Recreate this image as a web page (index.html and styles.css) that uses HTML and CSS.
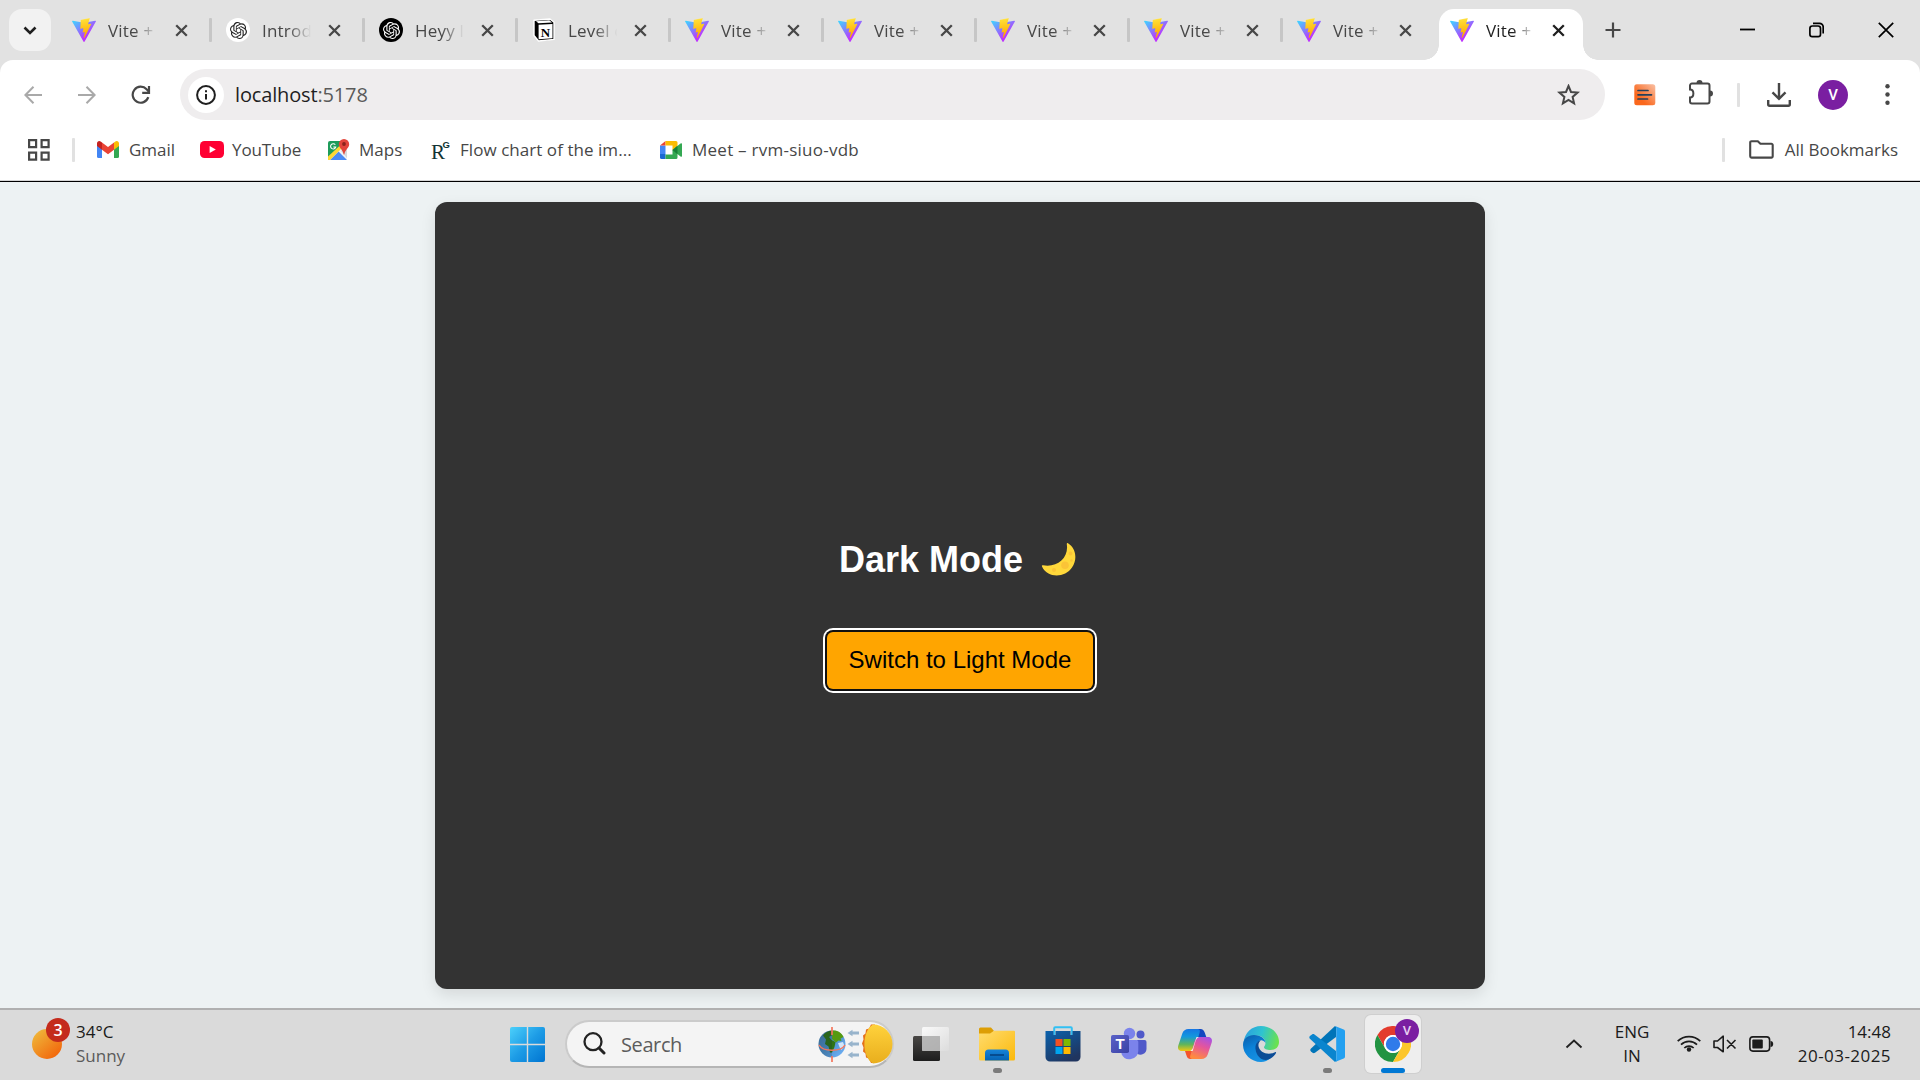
FILE: index.html
```html
<!DOCTYPE html>
<html lang="en">
<head>
<meta charset="utf-8">
<title>Vite + React</title>
<link rel="stylesheet" href="styles.css">
</head>
<body>
<svg class="defs" width="0" height="0" aria-hidden="true">
  <defs>
    <linearGradient id="viteA" x1="0" y1=".08" x2=".58" y2=".78"><stop stop-color="#41d1ff"/><stop offset="1" stop-color="#bd34fe"/></linearGradient>
    <linearGradient id="viteB" x1=".43" y1=".02" x2=".5" y2=".9"><stop stop-color="#ffea83"/><stop offset=".08" stop-color="#ffdd35"/><stop offset="1" stop-color="#ffa800"/></linearGradient>
    <linearGradient id="sunG" x1=".1" y1=".1" x2=".8" y2=".9"><stop stop-color="#efb63a"/><stop offset="1" stop-color="#f2690d"/></linearGradient>
    <linearGradient id="winG" gradientUnits="userSpaceOnUse" x1="0" y1="0" x2="35" y2="35"><stop stop-color="#4cd0fb"/><stop offset=".5" stop-color="#1d9ce6"/><stop offset="1" stop-color="#0074d1"/></linearGradient>
    <linearGradient id="extG" x1="1" y1="0" x2=".3" y2=".7"><stop stop-color="#f9c0a4"/><stop offset="1" stop-color="#fa671c"/></linearGradient>
    <linearGradient id="darkG" x1="0" y1="0" x2="0" y2="1"><stop stop-color="#494745"/><stop offset="1" stop-color="#1d1d1d"/></linearGradient>
    <linearGradient id="lightG" x1="0" y1="0" x2="1" y2="1"><stop stop-color="#fff"/><stop offset="1" stop-color="#ddd"/></linearGradient>
    <linearGradient id="folG" x1="0" y1="0" x2="1" y2="1"><stop stop-color="#ffdc6e"/><stop offset="1" stop-color="#fbb90b"/></linearGradient>
    <linearGradient id="blueG" x1="0" y1="0" x2="0" y2="1"><stop stop-color="#1784d8"/><stop offset="1" stop-color="#0563b4"/></linearGradient>
    <linearGradient id="stoG" x1="0" y1="0" x2=".6" y2="1"><stop stop-color="#0a62ad"/><stop offset="1" stop-color="#20355f"/></linearGradient>
    <linearGradient id="edgeA" x1="0" y1=".3" x2="1" y2=".5"><stop stop-color="#2a9fe0"/><stop offset=".5" stop-color="#2fc3d0"/><stop offset="1" stop-color="#6be24d"/></linearGradient>
    <linearGradient id="edgeB" x1="0" y1="0" x2=".5" y2="1"><stop stop-color="#0b5ba8"/><stop offset=".5" stop-color="#0c82d8"/><stop offset="1" stop-color="#1791e2"/></linearGradient>
    <linearGradient id="copA" x1="0" y1="0" x2="0" y2="1"><stop stop-color="#1676e3"/><stop offset=".35" stop-color="#1398dd"/><stop offset=".7" stop-color="#5fb55c"/><stop offset="1" stop-color="#f1c811"/></linearGradient>
    <linearGradient id="copB" x1=".8" y1="0" x2=".4" y2="1"><stop stop-color="#a552e6"/><stop offset=".45" stop-color="#e4559d"/><stop offset="1" stop-color="#ff8b40"/></linearGradient>
    <linearGradient id="teamG" x1="0" y1="0" x2="1" y2="1"><stop stop-color="#5a62c8"/><stop offset="1" stop-color="#3a41a5"/></linearGradient>
    <linearGradient id="earthG" x1="0" y1="0" x2="1" y2="1"><stop stop-color="#3f78a8"/><stop offset=".45" stop-color="#4d8ec6"/><stop offset="1" stop-color="#74b6ff"/></linearGradient>
    <linearGradient id="dayG" x1="0" y1="0" x2="0" y2="1"><stop stop-color="#ffd23c"/><stop offset="1" stop-color="#e9ae1d"/></linearGradient>
  </defs>
  <symbol id="vite" viewBox="0 0 256 257">
    <path fill="url(#viteA)" d="M255.153 37.938L134.897 252.976c-2.483 4.44-8.862 4.466-11.382.048L.875 37.958c-2.746-4.814 1.371-10.646 6.827-9.67l120.385 21.517a6.537 6.537 0 0 0 2.322-.004l117.867-21.483c5.438-.991 9.574 4.796 6.877 9.62Z"/>
    <path fill="url(#viteB)" d="M185.432.063L96.44 17.501a3.268 3.268 0 0 0-2.634 3.014l-5.474 92.456a3.268 3.268 0 0 0 3.997 3.378l24.777-5.718c2.318-.535 4.413 1.507 3.936 3.838l-7.361 36.047c-.495 2.426 1.782 4.5 4.151 3.78l15.304-4.649c2.372-.72 4.652 1.36 4.15 3.788l-11.698 56.621c-.732 3.542 3.979 5.473 5.943 2.437l1.313-2.028l72.516-144.72c1.215-2.423-.88-5.186-3.54-4.672l-25.505 4.922c-2.396.462-4.435-1.77-3.759-4.114l16.646-57.705c.677-2.35-1.37-4.583-3.769-4.113Z"/>
  </symbol>
  <symbol id="openai" viewBox="0 0 24 24">
    <path fill="currentColor" d="M22.2819 9.8211a5.9847 5.9847 0 0 0-.5157-4.9108 6.0462 6.0462 0 0 0-6.5098-2.9A6.0651 6.0651 0 0 0 4.9807 4.1818a5.9847 5.9847 0 0 0-3.9977 2.9 6.0462 6.0462 0 0 0 .7427 7.0966 5.98 5.98 0 0 0 .511 4.9107 6.051 6.051 0 0 0 6.5146 2.9001A5.9847 5.9847 0 0 0 13.2599 24a6.0557 6.0557 0 0 0 5.7718-4.2058 5.9894 5.9894 0 0 0 3.9977-2.9001 6.0557 6.0557 0 0 0-.7475-7.0729zm-9.022 12.6081a4.4755 4.4755 0 0 1-2.8764-1.0408l.1419-.0804 4.7783-2.7582a.7948.7948 0 0 0 .3927-.6813v-6.7369l2.02 1.1686a.071.071 0 0 1 .038.052v5.5826a4.504 4.504 0 0 1-4.4945 4.4944zm-9.6607-4.1254a4.4708 4.4708 0 0 1-.5346-3.0137l.142.0852 4.783 2.7582a.7712.7712 0 0 0 .7806 0l5.8428-3.3685v2.3324a.0804.0804 0 0 1-.0332.0615L9.74 19.9502a4.4992 4.4992 0 0 1-6.1408-1.6464zM2.3408 7.8956a4.485 4.485 0 0 1 2.3655-1.9728V11.6a.7664.7664 0 0 0 .3879.6765l5.8144 3.3543-2.0201 1.1685a.0757.0757 0 0 1-.071 0l-4.8303-2.7865A4.504 4.504 0 0 1 2.3408 7.872zm16.5963 3.8558L13.1038 8.364 15.1192 7.2a.0757.0757 0 0 1 .071 0l4.8303 2.7913a4.4944 4.4944 0 0 1-.6765 8.1042v-5.6772a.79.79 0 0 0-.407-.667zm2.0107-3.0231l-.142-.0852-4.7735-2.7818a.7759.7759 0 0 0-.7854 0L9.409 9.2297V6.8974a.0662.0662 0 0 1 .0284-.0615l4.8303-2.7866a4.4992 4.4992 0 0 1 6.6802 4.66zM8.3065 12.863l-2.02-1.1638a.0804.0804 0 0 1-.038-.0567V6.0742a4.4992 4.4992 0 0 1 7.3757-3.4537l-.142.0805L8.704 5.459a.7948.7948 0 0 0-.3927.6813zm1.0976-2.3654l2.602-1.4998 2.6069 1.4998v2.9994l-2.5974 1.4997-2.6067-1.4997Z"/>
  </symbol>
  <symbol id="close" viewBox="0 0 13 13"><path d="M1.2 1.2 11.8 11.8M11.8 1.2 1.2 11.8" stroke="currentColor" stroke-width="2.3" fill="none"/></symbol>
</svg>

<header class="tabstrip">
  <button class="tab-search"><svg width="14" height="9" viewBox="0 0 14 9"><path d="M1.5 1.5 7 7 12.5 1.5" fill="none" stroke="#1f1f1f" stroke-width="2.6"/></svg></button>
  <div class="tabs">
    <div class="tab"><svg class="fav"><use href="#vite"/></svg><span class="title">Vite +</span><svg class="x"><use href="#close"/></svg><i class="sep"></i></div>
    <div class="tab"><span class="fav chip light"><svg><use href="#openai"/></svg></span><span class="title">Introd</span><svg class="x"><use href="#close"/></svg><i class="sep"></i></div>
    <div class="tab"><span class="fav chip dark"><svg><use href="#openai"/></svg></span><span class="title">Heyy l</span><svg class="x"><use href="#close"/></svg><i class="sep"></i></div>
    <div class="tab"><svg class="fav" viewBox="0 0 24 24"><path d="M2 2.2 18 1l4 3.2v17.2L6.5 23 2 17.500Z" fill="#000" stroke="#fff" stroke-width="1.400" stroke-linejoin="round"/><path d="M4 3.200 17.300 2.300 20 4.400 6.500 5.200Z" fill="#fff"/><path d="M6.600 6.800 20.500 6v14.300L6.600 21.300Z" fill="#fff"/><text x="13.500" y="18.500" text-anchor="middle" class="notion-n">N</text></svg><span class="title">Level c</span><svg class="x"><use href="#close"/></svg><i class="sep"></i></div>
    <div class="tab"><svg class="fav"><use href="#vite"/></svg><span class="title">Vite +</span><svg class="x"><use href="#close"/></svg><i class="sep"></i></div>
    <div class="tab"><svg class="fav"><use href="#vite"/></svg><span class="title">Vite +</span><svg class="x"><use href="#close"/></svg><i class="sep"></i></div>
    <div class="tab"><svg class="fav"><use href="#vite"/></svg><span class="title">Vite +</span><svg class="x"><use href="#close"/></svg><i class="sep"></i></div>
    <div class="tab"><svg class="fav"><use href="#vite"/></svg><span class="title">Vite +</span><svg class="x"><use href="#close"/></svg><i class="sep"></i></div>
    <div class="tab"><svg class="fav"><use href="#vite"/></svg><span class="title">Vite +</span><svg class="x"><use href="#close"/></svg></div>
    <div class="tab active"><svg class="fav"><use href="#vite"/></svg><span class="title">Vite +</span><svg class="x"><use href="#close"/></svg></div>
  </div>
  <svg class="newtab" width="16" height="16" viewBox="0 0 16 16"><path d="M8 .5v15M.5 8h15" stroke="#474747" stroke-width="2.200"/></svg>
  <div class="window-buttons">
    <svg width="15" height="16" viewBox="0 0 15 16"><path d="M0 7.500h15" stroke="#000" stroke-width="1.800"/></svg>
    <svg width="15" height="16" viewBox="0 0 15 16"><rect x=".9" y="4" width="10.600" height="10.600" rx="2.400" fill="none" stroke="#000" stroke-width="1.700"/><path d="M4 1.300h6.500a3.700 3.700 0 0 1 3.700 3.700v6.500" fill="none" stroke="#000" stroke-width="1.700"/></svg>
    <svg width="16" height="16" viewBox="0 0 16 16"><path d="M.8.8 15.200 15.200M15.200.8.8 15.200" stroke="#000" stroke-width="1.700"/></svg>
  </div>
</header>

<nav class="toolbar">
  <svg class="back" width="18" height="18" viewBox="0 0 18 18"><path d="M9.500.8 1.400 9l8.100 8.200M1.400 9H18" fill="none" stroke="#a9a9a9" stroke-width="2"/></svg>
  <svg class="forward" width="18" height="18" viewBox="0 0 18 18"><path d="M8.500.8 16.600 9l-8.100 8.200M16.600 9H0" fill="none" stroke="#a9a9a9" stroke-width="2"/></svg>
  <svg class="reload" width="20" height="20" viewBox="0 0 20 20"><path d="M17.300 12.200A8 8 0 1 1 15.600 4.300l2 2M18 1v6.800h-6.800" fill="none" stroke="#474747" stroke-width="2.200"/></svg>
  <div class="omnibox">
    <span class="site-info"><svg width="20" height="20" viewBox="0 0 20 20"><circle cx="10" cy="10" r="8.900" fill="none" stroke="#1f1f1f" stroke-width="2"/><path d="M10 9v5.500M10 5.300v2" stroke="#1f1f1f" stroke-width="2"/></svg></span>
    <span class="url">localhost<span>:5178</span></span>
    <svg class="star" width="23" height="22" viewBox="0 0 23 22"><path d="m11.500 2 2.500 6 6.600.600-5 4.300 1.500 6.400-5.600-3.400-5.600 3.400 1.500-6.400-5-4.300 6.600-.600Z" fill="none" stroke="#474747" stroke-width="2"/></svg>
  </div>
  <svg class="ext" width="22" height="22" viewBox="0 0 22 22"><rect x=".3" y=".3" width="21" height="21" rx="2.500" fill="url(#extG)"/><path d="M4 6.500H14M4 10.800h13.500M4 15h9.500" stroke="#25405c" stroke-width="1.700" stroke-linecap="round"/></svg>
  <svg class="puzzle" width="26" height="26" viewBox="0 0 26 26"><path d="M4 3.500h15.500a2 2 0 0 1 2 2v16a2 2 0 0 1-2 2H4a2 2 0 0 1-2-2v-4c4.500 0 4.500-8 0-8v-4a2 2 0 0 1 2-2Z" fill="none" stroke="#474747" stroke-width="2"/><path d="M8.500 3a3 3 0 0 1 6 0ZM22 10.500a3 3 0 0 1 0 6Z" fill="#474747"/></svg>
  <i class="vsep"></i>
  <svg class="download" width="24" height="24" viewBox="0 0 24 24"><path d="M12 0v15.500M5.500 9.300 12 15.800l6.500-6.500M1.200 17v4.300a1.400 1.400 0 0 0 1.400 1.400h18.800a1.400 1.400 0 0 0 1.400-1.400V17" fill="none" stroke="#474747" stroke-width="2.400"/></svg>
  <span class="avatar">V</span>
  <svg class="menu" width="5" height="21" viewBox="0 0 5 21"><g fill="#474747"><circle cx="2.500" cy="2.300" r="2.200"/><circle cx="2.500" cy="10.500" r="2.200"/><circle cx="2.500" cy="18.700" r="2.200"/></g></svg>
</nav>

<nav class="bookmarks">
  <svg class="apps" width="22" height="22" viewBox="0 0 22 22"><path d="M1.100 1.100h7v7h-7zM13.600 1.100h7v7h-7zM1.100 13.600h7v7h-7zM13.600 13.600h7v7h-7z" fill="none" stroke="#474747" stroke-width="2.200"/></svg>
  <i class="vsep"></i>
  <a class="bm gmail"><svg width="22" height="17" viewBox="0 0 22 17"><path d="M0 3v12.500A1.500 1.500 0 0 0 1.500 17H5V7Z" fill="#4285f4"/><path d="M22 3v12.500a1.500 1.500 0 0 1-1.500 1.500H17V7Z" fill="#34a853"/><path d="M5 1.600V8.700l6 4.500 6-4.500V1.600l-6 4.500Z" fill="#ea4335"/><path d="M0 2.500C0 .2 2.300-.700 4 .800l1 .8v7.100L0 5Z" fill="#c5221f"/><path d="M22 2.500c0-2.300-2.300-3.200-4-1.700l-1 .8v7.100L22 5Z" fill="#fbbc04"/></svg><span>Gmail</span></a>
  <a class="bm youtube"><svg width="24" height="17" viewBox="0 0 24 17"><rect width="24" height="17" rx="4.500" fill="#ff0033"/><path d="m9.600 5 6.200 3.500L9.600 12Z" fill="#fff"/></svg><span>YouTube</span></a>
  <a class="bm maps"><svg width="23" height="23" viewBox="0 0 23 23"><rect x="1" y="3" width="19" height="19" rx="2" fill="#f1f3f4"/><path d="M1 20V5a2 2 0 0 1 2-2h12v6Z" fill="#1e9c5a"/><path d="m3 22 8.500-8.500L20 22Z" fill="#4a8af4"/><path d="M1 18.500V22h2L16 9l-2-2.500Z" fill="#fdd835"/><path d="M14 13 20 20V9Z" fill="#d5d9dd"/><path d="M17 1a5.200 5.200 0 0 1 5.200 5.200c0 3.600-4 5-4.900 10.300h-.6C15.800 11.200 11.800 9.800 11.800 6.200A5.200 5.200 0 0 1 17 1Z" fill="#e2453a"/><circle cx="17" cy="6" r="1.900" fill="#8b241b"/><path d="M8.300 6.800A2.600 2.600 0 1 0 8.700 9H6.300" fill="none" stroke="#fff" stroke-width="1.100"/></svg><span>Maps</span></a>
  <a class="bm rg"><svg width="20" height="24" viewBox="0 0 20 24"><text x="0" y="21" class="rg-r">R</text><text x="11.500" y="9.500" class="rg-g">G</text></svg><span>Flow chart of the im...</span></a>
  <a class="bm meet"><svg width="22" height="18" viewBox="0 0 22 18"><path d="M0 4.500h5.500V13H0Z" fill="#4285f4"/><path d="M0 13h5.500v5H1.500A1.500 1.500 0 0 1 0 16.500Z" fill="#1967d2"/><path d="M5.500 0v4.500H0Z" fill="#ea4335"/><path d="M5.500 0H16a1.500 1.500 0 0 1 1.500 1.500V9h-5V4.500h-7Z" fill="#fbbc04"/><path d="M5.500 13.500h7V9h5v7.500A1.500 1.500 0 0 1 16 18H5.500Z" fill="#34a853"/><path d="m12.500 9 8-6.500q1.500-.800 1.500.500v12q0 1.300-1.500.500Z" fill="#34a853"/><path d="m12.500 9 5-4.200v8.400Z" fill="#188038"/></svg><span>Meet – rvm-siuo-vdb</span></a>
  <div class="all"><i class="vsep"></i><svg width="25" height="19" viewBox="0 0 25 19"><path d="M2.500 1.200h6.300l2.600 2.600h11a1.300 1.300 0 0 1 1.300 1.300v11.200a1.300 1.300 0 0 1-1.300 1.300H2.500a1.300 1.300 0 0 1-1.300-1.300V2.500a1.300 1.300 0 0 1 1.300-1.300Z" fill="none" stroke="#474747" stroke-width="2.100"/></svg><span>All Bookmarks</span></div>
</nav>

<main class="page">
  <section class="card">
    <h1>Dark Mode <svg class="moon" width="35" height="33" viewBox="0 0 35 33"><path d="M27 .3C34.500 5 37 15.500 31 24.500 24 35 6.500 35.500 1 23.500c-.4-1 0-1.500 1-1.200C16 25 28 15 25.800 1.300c-.1-1 .4-1.500 1.200-1Z" fill="#ffd83b"/><g fill="#fbc437"><circle cx="24" cy="22.300" r="3.800"/><circle cx="13" cy="27" r="2"/><circle cx="29.500" cy="10.500" r="2"/><circle cx="30.500" cy="17.500" r="1.200"/></g></svg></h1>
    <button class="toggle">Switch to Light Mode</button>
  </section>
</main>

<footer class="taskbar">
  <div class="weather">
    <span class="sun"><svg width="30" height="30" viewBox="0 0 30 30"><circle cx="15" cy="15" r="15" fill="url(#sunG)"/></svg><b>3</b></span>
    <div class="two-line"><span>34°C</span><span class="muted">Sunny</span></div>
  </div>
  <div class="dock">
    <svg class="start" width="35" height="35" viewBox="0 0 35 35"><path d="M2 0h14.800v16.800H0V2a2 2 0 0 1 2-2ZM18.200 0H33a2 2 0 0 1 2 2v14.800H18.200ZM0 18.200h16.800V35H2a2 2 0 0 1-2-2ZM18.200 18.200H35V33a2 2 0 0 1-2 2H18.200Z" fill="url(#winG)"/></svg>
    <div class="search">
      <svg width="23" height="24" viewBox="0 0 23 24"><circle cx="10" cy="9.700" r="8.500" fill="none" stroke="#222" stroke-width="2.300"/><path d="m16 16 5 5" stroke="#222" stroke-width="3" stroke-linecap="round"/></svg>
      <span>Search</span>
      <svg class="doodle" width="75" height="42" viewBox="0 0 75 42"><circle cx="14" cy="21" r="13.500" fill="url(#earthG)"/><path d="M5 12.500c2-3 5.500-4.500 9-5l1 4-4 2.500 2.500 3 4 2-1 5-2.500 5.500h-2l-1.500-6-3.500-2.500 1-4.500Z" fill="#2f7316"/><path d="M14.500 7.600c5-.600 9 2 11 6.400l-3 1.500 1 2.500-3-.500-2.500 2-4-3.500Z" fill="#559a10"/><path d="m20 20 5-1 1.500 4-3 4-2-3Z" fill="#cfe6fb"/><path d="M14 7.500a13.500 13.500 0 0 0 0 27Z" fill="#123" opacity=".18"/><path d="M1 22c4 7 22 7 26 0" fill="none" stroke="#f4765c" stroke-width="1.500"/><path d="M14 4v8M14 33v6" stroke="#f4765c" stroke-width="1.700"/><path d="m29.500 10 5-3.300V8.500H41v3h-6.500v1.800ZM29.500 21l5-3.300v1.800H41v3h-6.500v1.800ZM29.500 32l5-3.300v1.800H41v3h-6.500v1.800Z" fill="#98b4cc"/><path d="m53 1.500-2 4-3 1-.5 4-2.500 2 .5 4-1.500 4 1.500 4-.500 4 2.500 2 .5 4 3 1 2 4.500h4V1.500Z" fill="#e5701a"/><path d="M55 1.500a19.500 19.500 0 0 1 0 39C43.500 34 43.500 8 55 1.500Z" fill="url(#dayG)"/></svg>
    </div>
    <div class="app"><svg width="36" height="36" viewBox="0 0 36 36"><rect x="0" y="10" width="27" height="25" rx="1.500" fill="url(#darkG)"/><rect x="9" y="1" width="27" height="24" rx="1.500" fill="url(#lightG)" opacity=".85"/><path d="M9 10h18v15H9Z" fill="#aaa" opacity=".75"/></svg></div>
    <div class="app"><svg width="36" height="36" viewBox="0 0 36 36"><path d="M0 8V3a1.500 1.500 0 0 1 1.500-1.500H12l3 3.500-3 3Z" fill="#dd9e05"/><path d="M0 7.500h11l4-2.700h20a1 1 0 0 1 1 1V33a1.500 1.500 0 0 1-1.500 1.500h-33A1.500 1.500 0 0 1 0 33Z" fill="url(#folG)"/><path d="M6 34.500V27a3.500 3.500 0 0 1 3.500-3.500h17A3.500 3.500 0 0 1 30 27v7.500Z" fill="url(#blueG)"/><path d="M11 29h14" stroke="#06488a" stroke-width="1.800"/></svg><i class="run"></i></div>
    <div class="app"><svg width="36" height="36" viewBox="0 0 36 36"><path d="M9.200 9V2.200a1 1 0 0 1 1-1h15.600a1 1 0 0 1 1 1V9" fill="none" stroke="#32c0f3" stroke-width="2"/><path d="M.5 5h8v4h2V5h15v4h2V5h8v26a4.500 4.500 0 0 1-4.500 4.500H5A4.500 4.500 0 0 1 .5 31Z" fill="url(#stoG)"/><path d="M10.500 13h7v7h-7Z" fill="#f25022"/><path d="M18.500 13h7v7h-7Z" fill="#7fba00"/><path d="M10.500 21h7v7h-7Z" fill="#00a4ef"/><path d="M18.500 21h7v7h-7Z" fill="#ffb900"/></svg></div>
    <div class="app"><svg width="36" height="36" viewBox="0 0 36 36"><circle cx="29.500" cy="8.500" r="4" fill="#5059c9"/><path d="M26 14h7.500a2 2 0 0 1 2 2v7a6 6 0 0 1-9.500 4.500Z" fill="#5059c9"/><circle cx="18.500" cy="7.500" r="5.700" fill="#7b83eb"/><path d="M11 14h14.500a1.800 1.800 0 0 1 1.800 1.800V25a8.800 8.800 0 0 1-16.800 3Z" fill="#7b83eb"/><rect x="0" y="9" width="18" height="18" rx="1.800" fill="url(#teamG)"/><text x="9" y="23" text-anchor="middle" class="teams-t">T</text></svg></div>
    <div class="app"><svg width="36" height="36" viewBox="0 0 36 36"><path d="M18 3h5.500c2.200 0 3.500 1.500 4.200 3.600L29.300 11H25c-3 0-4 1.500-4.800 4Z" fill="#1347c0"/><path d="M18 33h-4.500c-2.200 0-3.500-1.500-4-3.600L8 25h4.500c3 0 4-1.500 4.800-4Z" fill="#f4542b"/><path d="M11.500 3H20c2.500 0 3.500 1 2.500 4l-4 13.500C17.500 23.500 16 25 13 25H5c-3.500 0-4.600-2.500-3.700-5.500l4-12C6.300 4.700 8.500 3 11.500 3Z" fill="url(#copA)"/><path d="M24.500 33H16c-2.500 0-3.500-1-2.500-4l4-13.500C18.500 12.500 20 11 23 11h8c3.500 0 4.600 2.500 3.700 5.500l-4 12c-1 2.800-3.200 4.500-6.200 4.500Z" fill="url(#copB)"/><path d="M19.500 11H22c-2.500 1-3 3-3.700 5l-2.600 9h-2.500c2-1 2.800-3 3.400-5Z" fill="#eee"/></svg></div>
    <div class="app"><svg width="36" height="36" viewBox="0 0 36 36"><path d="M.5 17C1.500 6.500 9 0 18 0c11 0 18 8 18 16 0 5-3.500 8-8.500 8-4 0-6.500-1.300-6.500-2.800 0-1 1.500-1.700 1.500-4.200 0-4-4-7.500-9-7.500C7 9.500 2 12.500.5 17Z" fill="url(#edgeA)"/><path d="M0 19C0 12.500 5.500 9 11 9c7 0 11.500 4 11.500 8-3-5-9-3-9 3.500 0 7 7 13 14.500 11C25 34.500 21.500 36 18 36 8 36 0 28 0 19Z" fill="url(#edgeB)"/><path d="M18 14.300c-3 0-6 4-5.500 8.500C13.300 31 20 36 26 33.300c3.500-1.600 6-4.300 7-6.300.3-.8-.3-1.200-1-.8-7 3.500-15.500.3-16.500-6-.3-2.300.5-4.500 2.500-5.900Z" fill="#0b4c96"/></svg></div>
    <div class="app"><svg width="36" height="36" viewBox="0 0 36 36"><path d="M26 0 2 22.500c-1 1-1 2 0 3l1.500 1.300c.8.600 1.600.6 2.500 0L27 11V1Z" fill="#0074b8"/><path d="M26 36 .9 12.800c-.8-.8-.8-1.900 0-2.700L3 8.500c.8-.6 1.600-.6 2.500 0L27 25v10Z" fill="#0a85ce"/><path d="m26 0 8.700 3.500c.8.400 1.300 1.100 1.300 2v25c0 .9-.5 1.600-1.300 2L26 36c.8-.5 1.200-1.300 1.200-2.200V2.200C27.200 1.300 26.800.5 26 0Z" fill="#23a0f0"/></svg><i class="run"></i></div>
    <div class="app current"><svg width="36" height="36" viewBox="0 0 36 36"><circle cx="18" cy="18" r="18" fill="#fff"/><path d="M18 9h15.600A18 18 0 0 0 2.400 9l7.800 13.500A9 9 0 0 1 18 9Z" fill="#e33b2e"/><path d="M25.800 22.500 18 36A18 18 0 0 1 2.400 9l7.800 13.500a9 9 0 0 0 15.600 0Z" fill="#229342"/><path d="M18 9h15.600A18 18 0 0 1 18 36l7.800-13.500A9 9 0 0 0 18 9Z" fill="#fcc62a"/><circle cx="18" cy="18" r="9" fill="#fff"/><circle cx="18" cy="18" r="7.200" fill="#2f7bea"/></svg><b>V</b><i class="run"></i></div>
  </div>
  <div class="tray">
    <svg class="chev" width="18" height="10" viewBox="0 0 18 10"><path d="m1.500 8.500 7.500-7 7.500 7" fill="none" stroke="#222" stroke-width="1.900"/></svg>
    <div class="two-line lang"><span>ENG</span><span>IN</span></div>
    <svg class="wifi" width="24" height="18" viewBox="0 0 24 18"><g fill="none" stroke="#1b1b1b" stroke-width="1.700"><path d="M.7 7.200a16 16 0 0 1 22.600 0M4 10.600a11.300 11.300 0 0 1 16 0M7.300 14a6.700 6.700 0 0 1 9.400 0"/></g><circle cx="12" cy="15.500" r="2.200" fill="#1b1b1b"/></svg>
    <svg class="vol" width="24" height="18" viewBox="0 0 24 18"><path d="M1 6h3.500L10.200 1.200v15.600L4.500 12.500H1ZM14 5l8.500 8.500M22.500 5 14 13.500" fill="none" stroke="#1b1b1b" stroke-width="1.600" stroke-linejoin="round"/></svg>
    <svg class="bat" width="25" height="16" viewBox="0 0 25 16"><rect x=".9" y=".9" width="19.700" height="14.200" rx="3" fill="none" stroke="#1b1b1b" stroke-width="1.600"/><rect x="3.300" y="3.500" width="10.500" height="9" rx="1" fill="#1b1b1b"/><path d="M21.500 5c1.700 0 2.700 1 2.700 3s-1 3-2.700 3Z" fill="#1b1b1b"/></svg>
    <div class="two-line clock"><span>14:48</span><span class="date">20-03-2025</span></div>
  </div>
</footer>
</body>
</html>
```
FILE: styles.css
```css
* { box-sizing: border-box; }

body {
  margin: 0;
  width: 1920px;
  height: 1080px;
  overflow: hidden;
  display: flex;
  flex-direction: column;
  background: #e2e2e2;
  font-family: "Open Sans", "Noto Sans", sans-serif;
  font-size: 17px;
  color: #474747;
}

svg { display: block; flex: none; }
.defs { position: absolute; }
button { border: 0; padding: 0; font: inherit; }

/* Tab strip */
.tabstrip {
  height: 60px;
  flex: none;
  display: flex;
  padding-left: 9px;
  background: #e2e2e2;
}
.tab-search {
  width: 42px;
  height: 42px;
  margin-top: 9px;
  border-radius: 13px;
  background: #f2f2f2;
  display: grid;
  place-items: center;
}
.tabs { display: flex; align-items: flex-end; margin-left: 9px; }
.tab {
  width: 153px;
  height: 51px;
  padding: 0 1px 9px 13px;
  display: flex;
  align-items: center;
  flex: none;
}
.tab:first-child { padding-left: 12px; }
.tab .fav { width: 24px; height: 24px; flex: none; }
.chip { border-radius: 50%; display: grid; place-items: center; }
.chip svg { width: 17px; height: 17px; }
.chip.light { background: #fff; color: #222; }
.chip.dark { background: #000; color: #fff; }
.notion-n { font: bold 13px "Liberation Serif", serif; }
.title {
  width: 53px;
  margin-left: 12px;
  padding-top: 2px;
  line-height: 24px;
  letter-spacing: .2px;
  white-space: nowrap;
  overflow: hidden;
  -webkit-mask-image: linear-gradient(90deg, #000 50%, transparent 93%);
  mask-image: linear-gradient(90deg, #000 50%, transparent 93%);
}
.tab .x { width: 13px; height: 13px; margin-left: 13px; color: #474747; }
.tab:first-child .x { margin-left: 14px; }
.sep {
  width: 3px;
  height: 24px;
  margin-left: auto;
  border-radius: 1px;
  background: #c6c6c6;
}
.tab.active {
  position: relative;
  width: 144px;
  margin: 0 9px 0 2px;
  padding-left: 11px;
  border-radius: 15px 15px 0 0;
  background: #fff;
  color: #1f1f1f;
}
.active .x { color: #1f1f1f; }
.active::before, .active::after {
  content: "";
  position: absolute;
  bottom: 0;
  width: 15px;
  height: 15px;
}
.active::before { right: 100%; background: radial-gradient(circle at 0 0, transparent 14.500px, #fff 15px); }
.active::after { left: 100%; background: radial-gradient(circle at 100% 0, transparent 14.500px, #fff 15px); }
.newtab { margin: 22px 0 0 13px; }
.window-buttons {
  display: flex;
  gap: 54px;
  margin: 22px 26px 0 auto;
}

/* Toolbar */
.toolbar {
  height: 69px;
  flex: none;
  display: flex;
  align-items: center;
  padding: 0 30px 0 24px;
  background: #fff;
  border-radius: 13px 13px 0 0;
}
.forward { margin-left: 36px; }
.reload { margin-left: 35px; }
.omnibox {
  width: 1425px;
  height: 51px;
  margin-left: 29px;
  padding: 0 25px 0 8px;
  border-radius: 26px;
  background: #efedee;
  display: flex;
  align-items: center;
}
.site-info {
  width: 36px;
  height: 36px;
  border-radius: 50%;
  background: #fff;
  display: grid;
  place-items: center;
}
.url { margin-left: 11px; font-size: 20px; letter-spacing: -.15px; color: #1f1f1f; }
.url span { color: #5a5a5a; }
.star { margin-left: auto; }
.ext { margin-left: 29px; }
.puzzle { margin-left: 32px; margin-top: -3px; }
.vsep { width: 3px; height: 24px; border-radius: 1px; background: #e1e1e1; flex: none; }
.toolbar .vsep { margin-left: 23px; }
.download { margin-left: 27px; }
.avatar {
  width: 30px;
  height: 30px;
  margin-left: 27px;
  border-radius: 50%;
  background: #7a1ea1;
  color: #fff;
  font: 500 15px/30px Roboto, sans-serif;
  text-align: center;
}
.menu { margin-left: auto; }

/* Bookmarks bar */
.bookmarks {
  height: 53px;
  flex: none;
  display: flex;
  align-items: center;
  padding: 0 22px 11px 28px;
  background: #fff;
  border-bottom: 1px solid #000;
  box-shadow: inset 0 -1px #d6d6d6;
}
.bookmarks > .vsep { margin: 0 22px; }
.bm { display: flex; align-items: center; white-space: nowrap; flex: none; }
.gmail { width: 103px; gap: 10px; }
.youtube { width: 127px; gap: 8px; letter-spacing: -.1px; }
.maps { width: 104px; gap: 9px; }
.rg { width: 229px; gap: 9px; letter-spacing: .05px; }
.meet { gap: 10px; letter-spacing: .25px; }
.rg-r { font: 21px "Liberation Serif", serif; fill: #133; }
.rg-g { font: bold 9.500px "Liberation Sans", sans-serif; fill: #133; }
.all { margin-left: auto; display: flex; align-items: center; }
.all svg { margin: 0 11px 0 24px; }

/* Page */
.page {
  height: 826px;
  flex: none;
  display: flex;
  justify-content: center;
  padding-top: 20px;
  background: #edf2f3;
}
.card {
  width: 1050px;
  height: 787px;
  padding-top: 36px;
  border-radius: 12px;
  background: #333;
  box-shadow: 0 6px 15px rgba(0, 0, 0, .1);
  display: flex;
  flex-direction: column;
  align-items: center;
  justify-content: center;
  font-family: "Liberation Sans", Arial, sans-serif;
}
.card h1 {
  margin: 0 5px 51px 0;
  font-size: 36px;
  line-height: 42px;
  color: #fff;
  display: flex;
  align-items: center;
  gap: 18px;
}
.toggle {
  width: 266px;
  height: 57px;
  border-radius: 6px;
  background: #ffa500;
  color: #000;
  font-size: 24px;
  box-shadow: 0 0 0 2px #101010, 0 0 0 4px #fff;
}

/* Taskbar */
.taskbar {
  height: 72px;
  flex: none;
  display: flex;
  align-items: center;
  padding-bottom: 2px;
  border-top: 2px solid #b0b0b0;
  background: #dadada;
  color: #1b1b1b;
}
.two-line { display: flex; flex-direction: column; line-height: 24px; }
.muted { color: #5b5b5b; }
.weather { width: 478px; padding-left: 32px; display: flex; gap: 14px; }
.sun { position: relative; padding-top: 9px; }
.sun b {
  position: absolute;
  left: 14px;
  top: -2px;
  width: 24px;
  height: 24px;
  border-radius: 50%;
  background: #c42b1c;
  color: #fff;
  font: 600 16px/24px "Open Sans", sans-serif;
  text-align: center;
}
.dock { display: flex; align-items: center; margin-left: 32px; }
.search {
  width: 329px;
  height: 48px;
  margin: 0 4px 0 20px;
  padding: 0 0 0 16px;
  border: 2px solid #cbcbcb;
  border-bottom-color: #b5b5b5;
  border-radius: 24px;
  background: #f4f4f4;
  display: flex;
  align-items: center;
}
.search span { margin-left: 15px; font-size: 20px; letter-spacing: -.4px; color: #5c5c5c; }
.doodle { margin: 0 -1px 0 auto; }
.app {
  position: relative;
  width: 66px;
  height: 58px;
  display: grid;
  place-items: center;
}
.run {
  position: absolute;
  left: 50%;
  bottom: 0;
  width: 9px;
  height: 5px;
  margin-left: -4px;
  border-radius: 3px;
  background: #7b7b7b;
}
.teams-t { font: bold 15px "Liberation Sans", sans-serif; fill: #fff; }
.current {
  width: 56px;
  margin: 0 1px 0 5px;
  border-radius: 6px;
  background: #eee;
  box-shadow: 0 0 0 1px #cfcfcf;
}
.current b {
  position: absolute;
  right: 2px;
  top: 4px;
  width: 24px;
  height: 24px;
  border-radius: 50%;
  background: #7a1ea1;
  color: #e6cdf0;
  font: 500 13px/24px Roboto, sans-serif;
  text-align: center;
}
.current .run { width: 24px; margin-left: -12px; background: #0078d4; }
.tray { margin-left: auto; padding-right: 29px; display: flex; align-items: center; }
.lang { width: 50px; margin-left: 24px; align-items: center; }
.wifi { margin-left: 20px; margin-top: -2px; }
.vol { margin-left: 12px; }
.bat { margin-left: 12px; }
.clock { width: 117px; align-items: flex-end; }
.date { letter-spacing: .45px; }
```
